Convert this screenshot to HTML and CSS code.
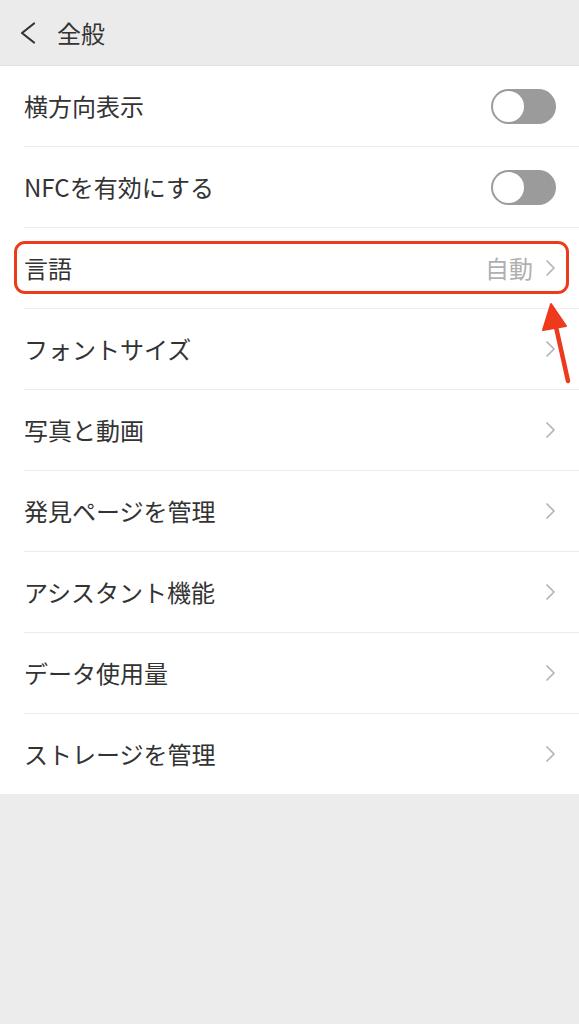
FILE: index.html
```html
<!DOCTYPE html>
<html lang="ja">
<head>
<meta charset="utf-8">
<link rel="stylesheet" href="styles.css">
</head>
<body>
<div class="page">
  <header class="topbar">
    <svg class="back" width="18" height="24" viewBox="0 0 18 24"><path d="M15 2.5 L3 12 L15 21.5" fill="none" stroke="#333" stroke-width="2.2" stroke-linecap="round" stroke-linejoin="round"/></svg>
    <span class="title">全般</span>
  </header>
  <ul class="list">
    <li class="row"><span class="label">横方向表示</span><span class="toggle"><span class="knob"></span></span></li>
    <li class="row"><span class="label">NFCを有効にする</span><span class="toggle"><span class="knob"></span></span></li>
    <li class="row highlighted"><span class="label">言語</span><span class="value">自動</span><svg class="chev" width="11" height="18" viewBox="0 0 11 18"><path d="M2 2 L9 9 L2 16" fill="none" stroke="#b3b3b3" stroke-width="1.7" stroke-linecap="round" stroke-linejoin="round"/></svg><span class="mark"></span></li>
    <li class="row"><span class="label">フォントサイズ</span><svg class="chev" width="11" height="18" viewBox="0 0 11 18"><path d="M2 2 L9 9 L2 16" fill="none" stroke="#b3b3b3" stroke-width="1.7" stroke-linecap="round" stroke-linejoin="round"/></svg></li>
    <li class="row"><span class="label">写真と動画</span><svg class="chev" width="11" height="18" viewBox="0 0 11 18"><path d="M2 2 L9 9 L2 16" fill="none" stroke="#b3b3b3" stroke-width="1.7" stroke-linecap="round" stroke-linejoin="round"/></svg></li>
    <li class="row"><span class="label">発見ページを管理</span><svg class="chev" width="11" height="18" viewBox="0 0 11 18"><path d="M2 2 L9 9 L2 16" fill="none" stroke="#b3b3b3" stroke-width="1.7" stroke-linecap="round" stroke-linejoin="round"/></svg></li>
    <li class="row"><span class="label">アシスタント機能</span><svg class="chev" width="11" height="18" viewBox="0 0 11 18"><path d="M2 2 L9 9 L2 16" fill="none" stroke="#b3b3b3" stroke-width="1.7" stroke-linecap="round" stroke-linejoin="round"/></svg></li>
    <li class="row"><span class="label">データ使用量</span><svg class="chev" width="11" height="18" viewBox="0 0 11 18"><path d="M2 2 L9 9 L2 16" fill="none" stroke="#b3b3b3" stroke-width="1.7" stroke-linecap="round" stroke-linejoin="round"/></svg></li>
    <li class="row"><span class="label">ストレージを管理</span><svg class="chev" width="11" height="18" viewBox="0 0 11 18"><path d="M2 2 L9 9 L2 16" fill="none" stroke="#b3b3b3" stroke-width="1.7" stroke-linecap="round" stroke-linejoin="round"/></svg></li>
  </ul>
  <svg class="arrow" width="40" height="90" viewBox="0 0 40 90"><path d="M29 84 L17 30" stroke="#ee3a1c" stroke-width="4.5" stroke-linecap="round"/><path d="M12 7 L4 33 L27 29 Z" fill="#ee3a1c" stroke="#ee3a1c" stroke-width="2" stroke-linejoin="round"/></svg>
</div>
</body>
</html>
```
FILE: styles.css
```css
html, body {
  margin: 0;
  padding: 0;
  background: #ececec;
}
body {
  font-family: "Noto Sans CJK JP", "Noto Sans", sans-serif;
  color: #333;
}
.page {
  position: relative;
  width: 579px;
  min-height: 1024px;
  background: #ececec;
}
.topbar {
  height: 65px;
  display: flex;
  align-items: center;
  padding-left: 19px;
  border-bottom: 1px solid #e0e0e0;
  background: #ebebeb;
}
.back {
  display: block;
  margin-right: 20px;
  margin-top: 1px;
}
.title {
  font-size: 24px;
  color: #333;
  line-height: 1;
}
.list {
  list-style: none;
  margin: 0;
  padding: 0 0 0 24px;
  background: #fff;
}
.row {
  position: relative;
  height: 80px;
  display: flex;
  align-items: center;
  border-bottom: 1px solid #ebebeb;
  padding-right: 23px;
}
.row:last-child {
  border-bottom: none;
}
.label {
  flex: 1;
  font-size: 24px;
  color: #333;
  line-height: 1;
}
.value {
  font-size: 24px;
  color: #b0b0b0;
  margin-right: 12px;
  line-height: 1;
}
.chev {
  display: block;
}
.toggle {
  position: relative;
  width: 65px;
  height: 35px;
  border-radius: 18px;
  background: #9b9b9b;
}
.knob {
  position: absolute;
  left: 2px;
  top: 2px;
  width: 31px;
  height: 31px;
  border-radius: 50%;
  background: #fff;
}
.mark {
  position: absolute;
  left: -10px;
  right: 10px;
  top: 13px;
  bottom: 14px;
  border: 3.5px solid #ee3a1c;
  border-radius: 11px;
  pointer-events: none;
}
.arrow {
  position: absolute;
  left: 539px;
  top: 297px;
}
```
